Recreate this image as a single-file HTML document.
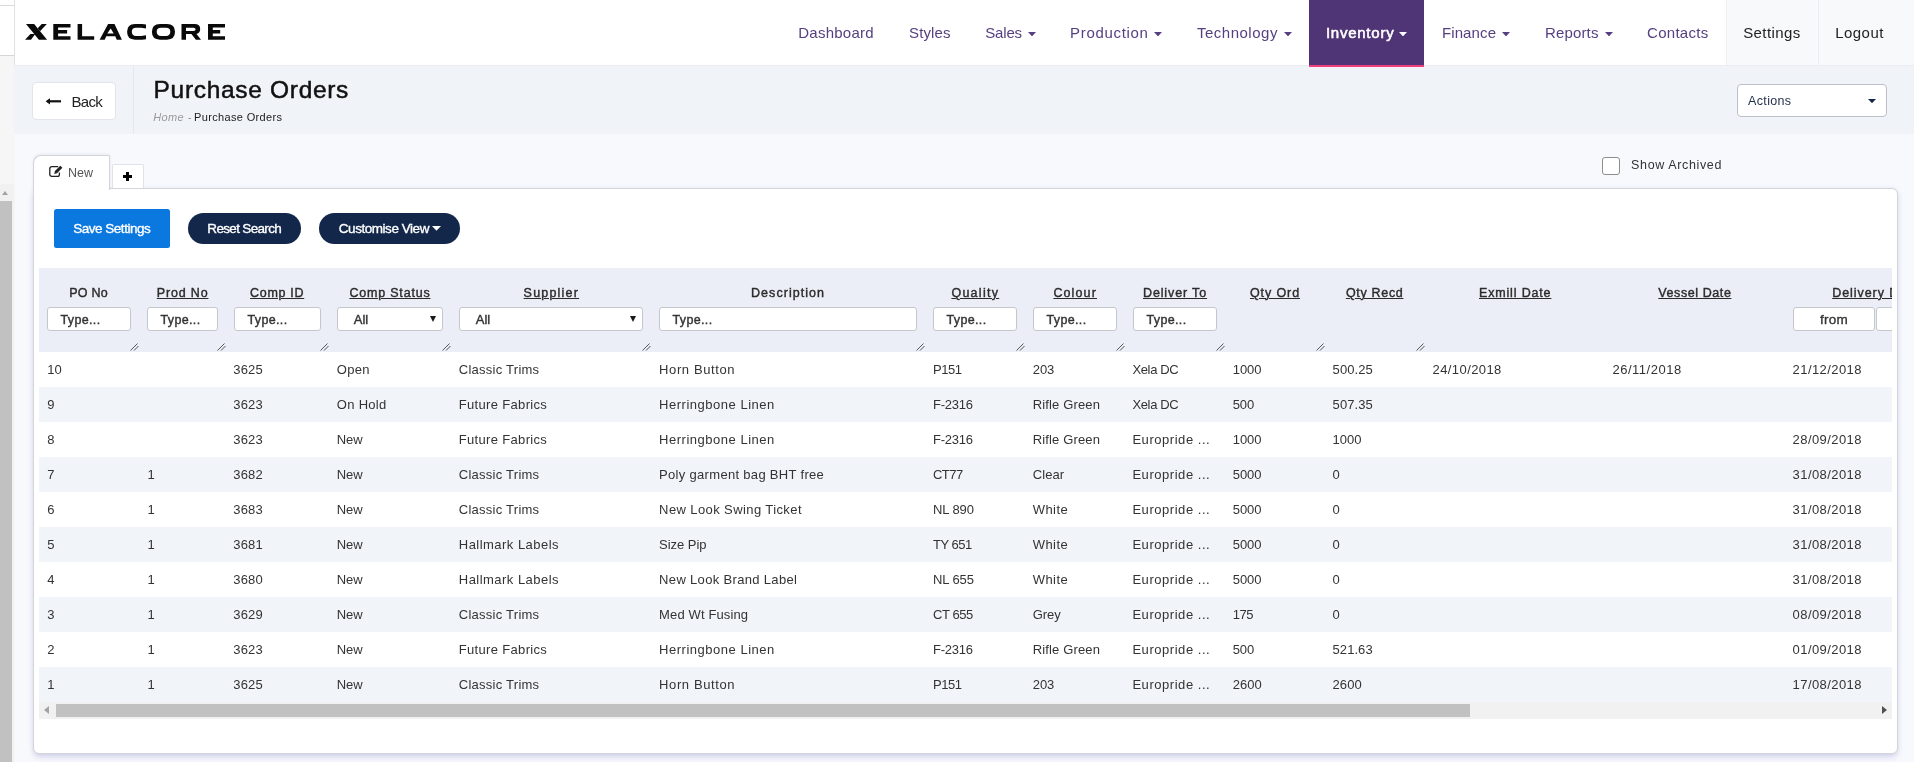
<!DOCTYPE html>
<html><head><meta charset="utf-8"><title>Purchase Orders</title>
<style>
*{box-sizing:border-box;margin:0;padding:0}
html,body{width:1914px;height:762px;overflow:hidden}
body{font-family:"Liberation Sans",sans-serif;background:#f8f9fd;position:relative;color:#333}
.a{position:absolute;white-space:nowrap}
#root{left:0;top:0;width:1914px;height:762px}
.t{will-change:transform}
#strip{left:0;top:0;width:15px;height:762px;background:#f6f6f6}
#topbar{left:14px;top:0;width:1900px;height:66px;background:#fff;border-bottom:1px solid #ebedf2}
.nav{color:#553f80}
.car{width:0;height:0;border-left:4px solid transparent;border-right:4px solid transparent;border-top:4.5px solid #553f80}
#inv{left:1309px;top:0;width:115px;height:67px;background:#4f3575;border-bottom:2px solid #ef3f7f}
#setbg{left:1726px;top:0;width:188px;height:65px;background:#f8f9fb;border-left:1px solid #eceef2}
#logsep{left:1818px;top:0;width:1px;height:65px;background:#eceef2}
#sub{left:14px;top:66px;width:1900px;height:68px;background:#f0f3f8}
#back{left:32px;top:82px;width:84px;height:37.5px;background:#fff;border:1px solid #e1e4ea;border-radius:4px}
#vdiv{left:133px;top:66px;width:1px;height:68px;background:#e4e7ee}
#actions{left:1737px;top:84px;width:150px;height:32.5px;background:#fff;border:1px solid #bcc0ca;border-radius:4px}
#panel{left:33px;top:188px;width:1865px;height:566px;background:#fff;border:1px solid #d3d5db;border-radius:0 6px 6px 6px;box-shadow:0 4px 6px -1px rgba(90,100,190,.24),0 0 4px rgba(120,125,160,.12)}
#tab1{left:33px;top:155px;width:77px;height:35px;background:#fff;border:1px solid #d3d5db;border-bottom:none;border-radius:8px 2px 0 0;box-shadow:0 -1px 3px rgba(80,90,140,.10)}
#tab2{left:112px;top:164px;width:32px;height:24px;background:#fff;border:1px solid #dfe2e8;border-bottom:none;border-radius:2px 2px 0 0}
#cb{left:1602px;top:157px;width:18px;height:18px;background:#fff;border:1px solid #8d8d8d;border-radius:3px}
.bt{color:#fff;-webkit-text-stroke:.35px #fff}
#b1{left:54px;top:209px;width:116px;height:38.5px;background:#0b78e0;border-radius:2.5px}
#b2{left:188px;top:213px;width:113px;height:30.5px;background:#13274b;border-radius:15.5px}
#b3{left:319px;top:213px;width:141px;height:30.5px;background:#13274b;border-radius:15.5px}
#thead{left:39px;top:268px;width:1853px;height:84px;background:#ebeef6;overflow:hidden}
.th{color:#2b2b2b}
.th.u{text-decoration:underline;text-underline-offset:1px;text-decoration-thickness:1px}
.in{top:39px;height:24px;background:#fff;border:1px solid #c4c7cc;border-radius:3px}
.it{color:#333}
.dn{width:0;height:0;border-left:3px solid transparent;border-right:3px solid transparent;border-top:6px solid #1a1a1a}
.rz{top:75px;width:9px;height:8px}
#tbody{left:39px;top:352px;width:1853px;height:350px;overflow:hidden;background:#fff}
.r{left:0;width:1853px;height:35px}
.r.o{background:#f1f4f9}
.c{color:#333}
#sb{left:39px;top:702px;width:1853px;height:17px;background:#f1f1f1}
#sbt{left:56px;top:704px;width:1414px;height:13px;background:#c1c1c1}
</style></head><body>

<div class="a" id="root">
<div class="a" id="strip"></div>
<div class="a" style="left:0;top:0;width:14px;height:55px;background:#fff"></div>
<div class="a" style="left:0;top:5px;width:14px;height:1px;background:#dadada"></div>
<div class="a" style="left:0;top:55px;width:14px;height:1px;background:#d6d6d6"></div>
<div class="a" style="left:0;top:184px;width:14px;height:578px;background:#f1f1f1"></div>
<div class="a" style="left:0;top:201px;width:12px;height:561px;background:#c1c1c1"></div>
<div class="a" style="left:2px;top:191px;width:0;height:0;border-left:3.5px solid transparent;border-right:3.5px solid transparent;border-bottom:4px solid #a3a3a3"></div>
<div class="a" id="topbar"></div>
<div class="a" style="left:14px;top:0;width:1px;height:65px;background:#e0e0e0"></div>
<div class="a" id="sub"></div><div class="a" id="vdiv"></div>
<div class="a" id="setbg"></div><div class="a" id="logsep"></div>
<div class="a" id="inv"></div>
<svg class="a" id="logo" style="left:25px;top:24px" width="202" height="16" viewBox="0 0 202 16"><g fill="#0a0a0a" fill-rule="evenodd"><path d="M1,0H9.1L22.1,15.7H13.9Z"/><path d="M16.75,0H21.8L15.05,7.18L12.7,4.33Z"/><path d="M5.4,10.05H10.2L6,15.7H0.1Z"/><path d="M28.3,0H45.5V3.5H33.1V6.1H42.1V9.5H33.1V12.2H45.5V15.7H28.3Z"/><path d="M52.6,0H57.1V12.2H69.2V15.7H52.6Z"/><path d="M74.6,15.7L83.1,0H89.5L96.9,15.7H91.8L90.2,12.3H81.3L79.7,15.7ZM85.7,4.4L88.7,9.5H82.3Z"/><path d="M121,0.4V4.5L116.3,3.7H111Q106.8,3.7 106.8,7.85Q106.8,12 111,12H116.3L121,11.2V15.3L117,15.7H110Q102.1,15.7 102.1,7.85Q102.1,0 110,0H117Z"/><path d="M135,0H142Q150,0 150,7.85Q150,15.7 142,15.7H135Q126.9,15.7 126.9,7.85Q126.9,0 135,0ZM136,3.8H141Q145.3,3.8 145.3,7.85Q145.3,12 141,12H136Q131.7,12 131.7,7.85Q131.7,3.8 136,3.8Z"/><path d="M156.5,0H169.5Q175.2,0 175.2,5.1Q175.2,9.2 171.5,10L176,15.7H170.9L166.4,10.1H161V15.7H156.5ZM161,3.8H168.5Q170.6,3.8 170.6,5.35Q170.6,6.9 168.5,6.9H161Z"/><path d="M183,0H200V3.5H187.8V6.1H195.2V9.5H187.8V12.2H200V15.7H183Z"/></g></svg>
<div class="a t nav" style="left:798px;top:22px;padding:0px 0 0 0.3px;font-size:15px;line-height:21px;letter-spacing:0.241px;">Dashboard</div>
<div class="a t nav" style="left:909px;top:22px;padding:0px 0 0 0.1px;font-size:15px;line-height:21px;letter-spacing:0.105px;">Styles</div>
<div class="a t nav" style="left:985px;top:22px;padding:0px 0 0 0.3px;font-size:15px;line-height:21px;letter-spacing:-0.2px;">Sales</div>
<svg class="a" style="left:1028px;top:32px" width="8" height="4.4" viewBox="0 0 8 4.4"><path d="M0 0H8L4.0 4.4Z" fill="#553f80"/></svg>
<div class="a t nav" style="left:1070px;top:22px;padding:0px 0 0 0.0px;font-size:15px;line-height:21px;letter-spacing:0.694px;">Production</div>
<svg class="a" style="left:1154px;top:32px" width="8" height="4.4" viewBox="0 0 8 4.4"><path d="M0 0H8L4.0 4.4Z" fill="#553f80"/></svg>
<div class="a t nav" style="left:1196px;top:22px;padding:0px 0 0 0.9px;font-size:15px;line-height:21px;letter-spacing:0.514px;">Technology</div>
<svg class="a" style="left:1284px;top:32px" width="8" height="4.4" viewBox="0 0 8 4.4"><path d="M0 0H8L4.0 4.4Z" fill="#553f80"/></svg>
<div class="a t nav" style="left:1441px;top:22px;padding:0px 0 0 0.9px;font-size:15px;line-height:21px;letter-spacing:0.121px;">Finance</div>
<svg class="a" style="left:1502px;top:32px" width="8" height="4.4" viewBox="0 0 8 4.4"><path d="M0 0H8L4.0 4.4Z" fill="#553f80"/></svg>
<div class="a t nav" style="left:1545px;top:22px;padding:0px 0 0 0.0px;font-size:15px;line-height:21px;letter-spacing:0.15px;">Reports</div>
<svg class="a" style="left:1605px;top:32px" width="8" height="4.4" viewBox="0 0 8 4.4"><path d="M0 0H8L4.0 4.4Z" fill="#553f80"/></svg>
<div class="a t nav" style="left:1647px;top:22px;padding:0px 0 0 0.0px;font-size:15px;line-height:21px;letter-spacing:0.293px;">Contacts</div>
<div class="a t" style="left:1325px;top:22px;padding:0px 0 0 0.9px;font-size:15px;line-height:21px;letter-spacing:0.756px;color:#fff;-webkit-text-stroke:.55px #fff;">Inventory</div>
<svg class="a" style="left:1399px;top:32px" width="8" height="4.4" viewBox="0 0 8 4.4"><path d="M0 0H8L4.0 4.4Z" fill="#fff"/></svg>
<div class="a t" style="left:1743px;top:22px;padding:0px 0 0 0.2px;font-size:15px;line-height:21px;letter-spacing:0.407px;color:#222;">Settings</div>
<div class="a t" style="left:1835px;top:22px;padding:0px 0 0 0.2px;font-size:15px;line-height:21px;letter-spacing:0.465px;color:#222;">Logout</div>
<div class="a" id="back"></div>
<svg class="a" style="left:45px;top:96px" width="17" height="11" viewBox="0 0 17 11"><path d="M2.5 5.3H16" stroke="#111" stroke-width="2.2" fill="none"/><path d="M0.6 5.3L5 2.2V8.4Z" fill="#111"/></svg>
<div class="a t" style="left:71px;top:91px;padding:0px 0 0 0.6px;font-size:15px;line-height:21px;letter-spacing:-0.767px;color:#222;">Back</div>
<div class="a t" style="left:153px;top:74px;padding:0px 0 0 0.6px;font-size:24.5px;line-height:31px;letter-spacing:0.684px;color:#111;-webkit-text-stroke:.5px #111;">Purchase Orders</div>
<div class="a t" style="left:153px;top:109px;padding:0px 0 0 0.2px;font-size:11px;line-height:16px;letter-spacing:0.375px;font-style:italic;color:#9a9a9a;">Home</div>
<div class="a t" style="left:187px;top:109px;padding:0px 0 0 0.7px;font-size:11px;line-height:16px;letter-spacing:0px;font-style:italic;color:#9a9a9a;">-</div>
<div class="a t" style="left:194px;top:109px;padding:0px 0 0 0.0px;font-size:11px;line-height:16px;letter-spacing:0.348px;color:#222;">Purchase Orders</div>
<div class="a" id="actions"></div>
<div class="a t" style="left:1748px;top:92px;padding:0px 0 0 0.1px;font-size:12.5px;line-height:18px;letter-spacing:0.333px;color:#1e2d4a;">Actions</div>
<svg class="a" style="left:1868px;top:99px" width="8" height="4.2" viewBox="0 0 8 4.2"><path d="M0 0H8L4.0 4.2Z" fill="#13274b"/></svg>
<div class="a" id="panel"></div>
<div class="a" id="tab1"></div><div class="a" id="tab2"></div>
<div class="a" style="left:34px;top:186px;width:75px;height:6px;background:#fff"></div>
<svg class="a" style="left:48px;top:164px" width="16" height="14" viewBox="0 0 16 14"><path d="M10.2 2.7H3.7A1.9 1.9 0 0 0 1.8 4.6V10.4A1.9 1.9 0 0 0 3.7 12.3H9.5A1.9 1.9 0 0 0 11.4 10.4V8.6" stroke="#222" stroke-width="1.3" fill="none"/><path d="M6.2 9.9L6.9 7.1L12.3 1.7L14.4 3.8L9 9.2Z" fill="#222"/></svg>
<div class="a t" style="left:68px;top:164px;padding:0px 0 0 0.1px;font-size:12.5px;line-height:18px;letter-spacing:-0.012px;color:#555;">New</div>
<div class="a" style="left:123px;top:175px;width:9.4px;height:2.7px;background:#000"></div><div class="a" style="left:126.35px;top:171.7px;width:2.7px;height:9.4px;background:#000"></div>
<div class="a" id="cb"></div>
<div class="a t" style="left:1631px;top:156px;padding:0px 0 0 0.1px;font-size:12.5px;line-height:18px;letter-spacing:0.631px;color:#333;">Show Archived</div>
<div class="a" id="b1"></div><div class="a" id="b2"></div><div class="a" id="b3"></div>
<div class="a t bt" style="left:73px;top:219px;padding:0px 0 0 0.2px;font-size:13.5px;line-height:19px;letter-spacing:-0.479px;">Save Settings</div>
<div class="a t bt" style="left:207px;top:219px;padding:0px 0 0 0.3px;font-size:13.5px;line-height:19px;letter-spacing:-0.668px;">Reset Search</div>
<div class="a t bt" style="left:338px;top:219px;padding:0px 0 0 0.8px;font-size:13.5px;line-height:19px;letter-spacing:-0.456px;">Customise View</div>
<svg class="a" style="left:432.3px;top:226.3px" width="9" height="4.8" viewBox="0 0 9 4.8"><path d="M0 0H9L4.5 4.8Z" fill="#fff"/></svg>
<div class="a" id="thead">
<div class="a t th" style="left:30px;top:16px;padding:0px 0 0 0.3px;font-size:12.5px;line-height:18px;letter-spacing:0.2px;-webkit-text-stroke:.4px #2b2b2b;">PO No</div>
<div class="a t th u" style="left:117px;top:16px;padding:0px 0 0 0.8px;font-size:12.5px;line-height:18px;letter-spacing:0.837px;-webkit-text-stroke:.4px #2b2b2b;">Prod No</div>
<div class="a t th u" style="left:211px;top:16px;padding:0px 0 0 0.1px;font-size:12.5px;line-height:18px;letter-spacing:0.688px;-webkit-text-stroke:.4px #2b2b2b;">Comp ID</div>
<div class="a t th u" style="left:310px;top:16px;padding:0px 0 0 0.4px;font-size:12.5px;line-height:18px;letter-spacing:0.805px;-webkit-text-stroke:.4px #2b2b2b;">Comp Status</div>
<div class="a t th u" style="left:484px;top:16px;padding:0px 0 0 0.6px;font-size:12.5px;line-height:18px;letter-spacing:1.204px;-webkit-text-stroke:.4px #2b2b2b;">Supplier</div>
<div class="a t th" style="left:712px;top:16px;padding:0px 0 0 0.0px;font-size:12.5px;line-height:18px;letter-spacing:1.05px;-webkit-text-stroke:.4px #2b2b2b;">Description</div>
<div class="a t th u" style="left:912px;top:16px;padding:0px 0 0 0.4px;font-size:12.5px;line-height:18px;letter-spacing:1.271px;-webkit-text-stroke:.4px #2b2b2b;">Quality</div>
<div class="a t th u" style="left:1014px;top:16px;padding:0px 0 0 0.4px;font-size:12.5px;line-height:18px;letter-spacing:1.125px;-webkit-text-stroke:.4px #2b2b2b;">Colour</div>
<div class="a t th u" style="left:1104px;top:16px;padding:0px 0 0 0.0px;font-size:12.5px;line-height:18px;letter-spacing:0.869px;-webkit-text-stroke:.4px #2b2b2b;">Deliver To</div>
<div class="a t th u" style="left:1211px;top:16px;padding:0px 0 0 0.0px;font-size:12.5px;line-height:18px;letter-spacing:0.892px;-webkit-text-stroke:.4px #2b2b2b;">Qty Ord</div>
<div class="a t th u" style="left:1306px;top:16px;padding:0px 0 0 0.9px;font-size:12.5px;line-height:18px;letter-spacing:0.682px;-webkit-text-stroke:.4px #2b2b2b;">Qty Recd</div>
<div class="a t th u" style="left:1440px;top:16px;padding:0px 0 0 0.0px;font-size:12.5px;line-height:18px;letter-spacing:0.835px;-webkit-text-stroke:.4px #2b2b2b;">Exmill Date</div>
<div class="a t th u" style="left:1619px;top:16px;padding:0px 0 0 0.3px;font-size:12.5px;line-height:18px;letter-spacing:0.585px;-webkit-text-stroke:.4px #2b2b2b;">Vessel Date</div>
<div class="a t th u" style="left:1793px;top:16px;padding:0px 0 0 0.2px;font-size:12.5px;line-height:18px;letter-spacing:0.942px;-webkit-text-stroke:.4px #2b2b2b;">Delivery Date</div>
<div class="a in" style="left:8px;width:84px"></div>
<div class="a t it" style="left:21px;top:43px;padding:0px 0 0 0.6px;font-size:12.5px;line-height:18px;letter-spacing:0.333px;-webkit-text-stroke:.4px #333;">Type...</div>
<div class="a in" style="left:108px;width:71px"></div>
<div class="a t it" style="left:121px;top:43px;padding:0px 0 0 0.6px;font-size:12.5px;line-height:18px;letter-spacing:0.333px;-webkit-text-stroke:.4px #333;">Type...</div>
<div class="a in" style="left:195px;width:87px"></div>
<div class="a t it" style="left:208px;top:43px;padding:0px 0 0 0.6px;font-size:12.5px;line-height:18px;letter-spacing:0.333px;-webkit-text-stroke:.4px #333;">Type...</div>
<div class="a in" style="left:620px;width:258px"></div>
<div class="a t it" style="left:633px;top:43px;padding:0px 0 0 0.6px;font-size:12.5px;line-height:18px;letter-spacing:0.333px;-webkit-text-stroke:.4px #333;">Type...</div>
<div class="a in" style="left:894px;width:84px"></div>
<div class="a t it" style="left:907px;top:43px;padding:0px 0 0 0.6px;font-size:12.5px;line-height:18px;letter-spacing:0.333px;-webkit-text-stroke:.4px #333;">Type...</div>
<div class="a in" style="left:994px;width:84px"></div>
<div class="a t it" style="left:1007px;top:43px;padding:0px 0 0 0.6px;font-size:12.5px;line-height:18px;letter-spacing:0.333px;-webkit-text-stroke:.4px #333;">Type...</div>
<div class="a in" style="left:1094px;width:84px"></div>
<div class="a t it" style="left:1107px;top:43px;padding:0px 0 0 0.6px;font-size:12.5px;line-height:18px;letter-spacing:0.333px;-webkit-text-stroke:.4px #333;">Type...</div>
<div class="a in" style="left:298px;width:106px"></div>
<div class="a t it" style="left:314px;top:42px;padding:0px 0 0 0.8px;font-size:13px;line-height:19px;letter-spacing:0.0px;-webkit-text-stroke:.4px #333;">All</div>
<div class="a dn" style="left:391px;top:48.2px"></div>
<div class="a in" style="left:420px;width:184px"></div>
<div class="a t it" style="left:436px;top:42px;padding:0px 0 0 0.8px;font-size:13px;line-height:19px;letter-spacing:0.0px;-webkit-text-stroke:.4px #333;">All</div>
<div class="a dn" style="left:591px;top:48.2px"></div>
<div class="a in" style="left:1754px;width:82px"></div>
<div class="a t it" style="left:1780px;top:42px;padding:0px 0 0 0.9px;font-size:13.5px;line-height:19px;letter-spacing:0.3px;-webkit-text-stroke:.35px #333;">from</div>
<div class="a in" style="left:1836.5px;width:82px"></div>
<svg class="a rz" style="left:91px" viewBox="0 0 9 8"><path d="M0.5 7.5L7.5 0.5M4 7.5L8.5 3" stroke="#444" stroke-width=".9" fill="none"/></svg>
<svg class="a rz" style="left:178px" viewBox="0 0 9 8"><path d="M0.5 7.5L7.5 0.5M4 7.5L8.5 3" stroke="#444" stroke-width=".9" fill="none"/></svg>
<svg class="a rz" style="left:281px" viewBox="0 0 9 8"><path d="M0.5 7.5L7.5 0.5M4 7.5L8.5 3" stroke="#444" stroke-width=".9" fill="none"/></svg>
<svg class="a rz" style="left:403px" viewBox="0 0 9 8"><path d="M0.5 7.5L7.5 0.5M4 7.5L8.5 3" stroke="#444" stroke-width=".9" fill="none"/></svg>
<svg class="a rz" style="left:603px" viewBox="0 0 9 8"><path d="M0.5 7.5L7.5 0.5M4 7.5L8.5 3" stroke="#444" stroke-width=".9" fill="none"/></svg>
<svg class="a rz" style="left:877px" viewBox="0 0 9 8"><path d="M0.5 7.5L7.5 0.5M4 7.5L8.5 3" stroke="#444" stroke-width=".9" fill="none"/></svg>
<svg class="a rz" style="left:977px" viewBox="0 0 9 8"><path d="M0.5 7.5L7.5 0.5M4 7.5L8.5 3" stroke="#444" stroke-width=".9" fill="none"/></svg>
<svg class="a rz" style="left:1077px" viewBox="0 0 9 8"><path d="M0.5 7.5L7.5 0.5M4 7.5L8.5 3" stroke="#444" stroke-width=".9" fill="none"/></svg>
<svg class="a rz" style="left:1177px" viewBox="0 0 9 8"><path d="M0.5 7.5L7.5 0.5M4 7.5L8.5 3" stroke="#444" stroke-width=".9" fill="none"/></svg>
<svg class="a rz" style="left:1277px" viewBox="0 0 9 8"><path d="M0.5 7.5L7.5 0.5M4 7.5L8.5 3" stroke="#444" stroke-width=".9" fill="none"/></svg>
<svg class="a rz" style="left:1377px" viewBox="0 0 9 8"><path d="M0.5 7.5L7.5 0.5M4 7.5L8.5 3" stroke="#444" stroke-width=".9" fill="none"/></svg>
</div>
<div class="a" id="tbody">
<div class="a r" style="top:0px">
<div class="a t c" style="left:8px;top:8px;padding:0px 0 0 0.2px;font-size:13px;line-height:19px;letter-spacing:0px;">10</div>
<div class="a t c" style="left:194px;top:8px;padding:0px 0 0 0.3px;font-size:13px;line-height:19px;letter-spacing:0.142px;">3625</div>
<div class="a t c" style="left:297px;top:8px;padding:0px 0 0 0.8px;font-size:13px;line-height:19px;letter-spacing:0.283px;">Open</div>
<div class="a t c" style="left:419px;top:8px;padding:0px 0 0 0.8px;font-size:13px;line-height:19px;letter-spacing:0.254px;">Classic Trims</div>
<div class="a t c" style="left:620px;top:8px;padding:0px 0 0 0.1px;font-size:13px;line-height:19px;letter-spacing:0.602px;">Horn Button</div>
<div class="a t c" style="left:894px;top:8px;padding:0px 0 0 0.0px;font-size:13px;line-height:19px;letter-spacing:-0.492px;">P151</div>
<div class="a t c" style="left:993px;top:8px;padding:0px 0 0 0.7px;font-size:13px;line-height:19px;letter-spacing:-0.025px;">203</div>
<div class="a t c" style="left:1093px;top:8px;padding:0px 0 0 0.4px;font-size:13px;line-height:19px;letter-spacing:-0.346px;">Xela DC</div>
<div class="a t c" style="left:1193px;top:8px;padding:0px 0 0 0.7px;font-size:13px;line-height:19px;letter-spacing:-0.025px;">1000</div>
<div class="a t c" style="left:1293px;top:8px;padding:0px 0 0 0.6px;font-size:13px;line-height:19px;letter-spacing:0.07px;">500.25</div>
<div class="a t c" style="left:1393px;top:8px;padding:0px 0 0 0.5px;font-size:13px;line-height:19px;letter-spacing:0.419px;">24/10/2018</div>
<div class="a t c" style="left:1573px;top:8px;padding:0px 0 0 0.4px;font-size:13px;line-height:19px;letter-spacing:0.531px;">26/11/2018</div>
<div class="a t c" style="left:1753px;top:8px;padding:0px 0 0 0.6px;font-size:13px;line-height:19px;letter-spacing:0.419px;">21/12/2018</div>
</div>
<div class="a r o" style="top:35px">
<div class="a t c" style="left:8px;top:8px;padding:0px 0 0 0.2px;font-size:13px;line-height:19px;letter-spacing:0px;">9</div>
<div class="a t c" style="left:194px;top:8px;padding:0px 0 0 0.3px;font-size:13px;line-height:19px;letter-spacing:0.142px;">3623</div>
<div class="a t c" style="left:297px;top:8px;padding:0px 0 0 0.8px;font-size:13px;line-height:19px;letter-spacing:0.292px;">On Hold</div>
<div class="a t c" style="left:419px;top:8px;padding:0px 0 0 0.8px;font-size:13px;line-height:19px;letter-spacing:0.327px;">Future Fabrics</div>
<div class="a t c" style="left:620px;top:8px;padding:0px 0 0 0.1px;font-size:13px;line-height:19px;letter-spacing:0.513px;">Herringbone Linen</div>
<div class="a t c" style="left:894px;top:8px;padding:0px 0 0 0.0px;font-size:13px;line-height:19px;letter-spacing:-0.25px;">F-2316</div>
<div class="a t c" style="left:993px;top:8px;padding:0px 0 0 0.7px;font-size:13px;line-height:19px;letter-spacing:0.155px;">Rifle Green</div>
<div class="a t c" style="left:1093px;top:8px;padding:0px 0 0 0.4px;font-size:13px;line-height:19px;letter-spacing:-0.346px;">Xela DC</div>
<div class="a t c" style="left:1193px;top:8px;padding:0px 0 0 0.7px;font-size:13px;line-height:19px;letter-spacing:-0.075px;">500</div>
<div class="a t c" style="left:1293px;top:8px;padding:0px 0 0 0.6px;font-size:13px;line-height:19px;letter-spacing:0.07px;">507.35</div>
</div>
<div class="a r" style="top:70px">
<div class="a t c" style="left:8px;top:8px;padding:0px 0 0 0.2px;font-size:13px;line-height:19px;letter-spacing:0px;">8</div>
<div class="a t c" style="left:194px;top:8px;padding:0px 0 0 0.3px;font-size:13px;line-height:19px;letter-spacing:0.142px;">3623</div>
<div class="a t c" style="left:297px;top:8px;padding:0px 0 0 0.8px;font-size:13px;line-height:19px;letter-spacing:-0.113px;">New</div>
<div class="a t c" style="left:419px;top:8px;padding:0px 0 0 0.8px;font-size:13px;line-height:19px;letter-spacing:0.327px;">Future Fabrics</div>
<div class="a t c" style="left:620px;top:8px;padding:0px 0 0 0.1px;font-size:13px;line-height:19px;letter-spacing:0.513px;">Herringbone Linen</div>
<div class="a t c" style="left:894px;top:8px;padding:0px 0 0 0.0px;font-size:13px;line-height:19px;letter-spacing:-0.25px;">F-2316</div>
<div class="a t c" style="left:993px;top:8px;padding:0px 0 0 0.7px;font-size:13px;line-height:19px;letter-spacing:0.155px;">Rifle Green</div>
<div class="a t c" style="left:1093px;top:8px;padding:0px 0 0 0.4px;font-size:13px;line-height:19px;letter-spacing:0.544px;">Europride ...</div>
<div class="a t c" style="left:1193px;top:8px;padding:0px 0 0 0.7px;font-size:13px;line-height:19px;letter-spacing:-0.025px;">1000</div>
<div class="a t c" style="left:1293px;top:8px;padding:0px 0 0 0.6px;font-size:13px;line-height:19px;letter-spacing:-0.025px;">1000</div>
<div class="a t c" style="left:1753px;top:8px;padding:0px 0 0 0.6px;font-size:13px;line-height:19px;letter-spacing:0.419px;">28/09/2018</div>
</div>
<div class="a r o" style="top:105px">
<div class="a t c" style="left:8px;top:8px;padding:0px 0 0 0.2px;font-size:13px;line-height:19px;letter-spacing:0px;">7</div>
<div class="a t c" style="left:108px;top:8px;padding:0px 0 0 0.6px;font-size:13px;line-height:19px;letter-spacing:0px;">1</div>
<div class="a t c" style="left:194px;top:8px;padding:0px 0 0 0.3px;font-size:13px;line-height:19px;letter-spacing:0.142px;">3682</div>
<div class="a t c" style="left:297px;top:8px;padding:0px 0 0 0.8px;font-size:13px;line-height:19px;letter-spacing:-0.113px;">New</div>
<div class="a t c" style="left:419px;top:8px;padding:0px 0 0 0.8px;font-size:13px;line-height:19px;letter-spacing:0.254px;">Classic Trims</div>
<div class="a t c" style="left:620px;top:8px;padding:0px 0 0 0.1px;font-size:13px;line-height:19px;letter-spacing:0.31px;">Poly garment bag BHT free</div>
<div class="a t c" style="left:894px;top:8px;padding:0px 0 0 0.0px;font-size:13px;line-height:19px;letter-spacing:-0.517px;">CT77</div>
<div class="a t c" style="left:993px;top:8px;padding:0px 0 0 0.7px;font-size:13px;line-height:19px;letter-spacing:0.094px;">Clear</div>
<div class="a t c" style="left:1093px;top:8px;padding:0px 0 0 0.4px;font-size:13px;line-height:19px;letter-spacing:0.544px;">Europride ...</div>
<div class="a t c" style="left:1193px;top:8px;padding:0px 0 0 0.7px;font-size:13px;line-height:19px;letter-spacing:-0.025px;">5000</div>
<div class="a t c" style="left:1293px;top:8px;padding:0px 0 0 0.6px;font-size:13px;line-height:19px;letter-spacing:0px;">0</div>
<div class="a t c" style="left:1753px;top:8px;padding:0px 0 0 0.6px;font-size:13px;line-height:19px;letter-spacing:0.419px;">31/08/2018</div>
</div>
<div class="a r" style="top:140px">
<div class="a t c" style="left:8px;top:8px;padding:0px 0 0 0.2px;font-size:13px;line-height:19px;letter-spacing:0px;">6</div>
<div class="a t c" style="left:108px;top:8px;padding:0px 0 0 0.6px;font-size:13px;line-height:19px;letter-spacing:0px;">1</div>
<div class="a t c" style="left:194px;top:8px;padding:0px 0 0 0.3px;font-size:13px;line-height:19px;letter-spacing:0.142px;">3683</div>
<div class="a t c" style="left:297px;top:8px;padding:0px 0 0 0.8px;font-size:13px;line-height:19px;letter-spacing:-0.113px;">New</div>
<div class="a t c" style="left:419px;top:8px;padding:0px 0 0 0.8px;font-size:13px;line-height:19px;letter-spacing:0.254px;">Classic Trims</div>
<div class="a t c" style="left:620px;top:8px;padding:0px 0 0 0.1px;font-size:13px;line-height:19px;letter-spacing:0.401px;">New Look Swing Ticket</div>
<div class="a t c" style="left:894px;top:8px;padding:0px 0 0 0.0px;font-size:13px;line-height:19px;letter-spacing:-0.1px;">NL 890</div>
<div class="a t c" style="left:993px;top:8px;padding:0px 0 0 0.7px;font-size:13px;line-height:19px;letter-spacing:0.462px;">White</div>
<div class="a t c" style="left:1093px;top:8px;padding:0px 0 0 0.4px;font-size:13px;line-height:19px;letter-spacing:0.544px;">Europride ...</div>
<div class="a t c" style="left:1193px;top:8px;padding:0px 0 0 0.7px;font-size:13px;line-height:19px;letter-spacing:-0.025px;">5000</div>
<div class="a t c" style="left:1293px;top:8px;padding:0px 0 0 0.6px;font-size:13px;line-height:19px;letter-spacing:0px;">0</div>
<div class="a t c" style="left:1753px;top:8px;padding:0px 0 0 0.6px;font-size:13px;line-height:19px;letter-spacing:0.419px;">31/08/2018</div>
</div>
<div class="a r o" style="top:175px">
<div class="a t c" style="left:8px;top:8px;padding:0px 0 0 0.2px;font-size:13px;line-height:19px;letter-spacing:0px;">5</div>
<div class="a t c" style="left:108px;top:8px;padding:0px 0 0 0.6px;font-size:13px;line-height:19px;letter-spacing:0px;">1</div>
<div class="a t c" style="left:194px;top:8px;padding:0px 0 0 0.3px;font-size:13px;line-height:19px;letter-spacing:0.142px;">3681</div>
<div class="a t c" style="left:297px;top:8px;padding:0px 0 0 0.8px;font-size:13px;line-height:19px;letter-spacing:-0.113px;">New</div>
<div class="a t c" style="left:419px;top:8px;padding:0px 0 0 0.8px;font-size:13px;line-height:19px;letter-spacing:0.468px;">Hallmark Labels</div>
<div class="a t c" style="left:620px;top:8px;padding:0px 0 0 0.1px;font-size:13px;line-height:19px;letter-spacing:-0.036px;">Size Pip</div>
<div class="a t c" style="left:894px;top:8px;padding:0px 0 0 0.0px;font-size:13px;line-height:19px;letter-spacing:-0.465px;">TY 651</div>
<div class="a t c" style="left:993px;top:8px;padding:0px 0 0 0.7px;font-size:13px;line-height:19px;letter-spacing:0.462px;">White</div>
<div class="a t c" style="left:1093px;top:8px;padding:0px 0 0 0.4px;font-size:13px;line-height:19px;letter-spacing:0.544px;">Europride ...</div>
<div class="a t c" style="left:1193px;top:8px;padding:0px 0 0 0.7px;font-size:13px;line-height:19px;letter-spacing:-0.025px;">5000</div>
<div class="a t c" style="left:1293px;top:8px;padding:0px 0 0 0.6px;font-size:13px;line-height:19px;letter-spacing:0px;">0</div>
<div class="a t c" style="left:1753px;top:8px;padding:0px 0 0 0.6px;font-size:13px;line-height:19px;letter-spacing:0.419px;">31/08/2018</div>
</div>
<div class="a r" style="top:210px">
<div class="a t c" style="left:8px;top:8px;padding:0px 0 0 0.2px;font-size:13px;line-height:19px;letter-spacing:0px;">4</div>
<div class="a t c" style="left:108px;top:8px;padding:0px 0 0 0.6px;font-size:13px;line-height:19px;letter-spacing:0px;">1</div>
<div class="a t c" style="left:194px;top:8px;padding:0px 0 0 0.3px;font-size:13px;line-height:19px;letter-spacing:0.142px;">3680</div>
<div class="a t c" style="left:297px;top:8px;padding:0px 0 0 0.8px;font-size:13px;line-height:19px;letter-spacing:-0.113px;">New</div>
<div class="a t c" style="left:419px;top:8px;padding:0px 0 0 0.8px;font-size:13px;line-height:19px;letter-spacing:0.468px;">Hallmark Labels</div>
<div class="a t c" style="left:620px;top:8px;padding:0px 0 0 0.1px;font-size:13px;line-height:19px;letter-spacing:0.332px;">New Look Brand Label</div>
<div class="a t c" style="left:894px;top:8px;padding:0px 0 0 0.0px;font-size:13px;line-height:19px;letter-spacing:-0.1px;">NL 655</div>
<div class="a t c" style="left:993px;top:8px;padding:0px 0 0 0.7px;font-size:13px;line-height:19px;letter-spacing:0.462px;">White</div>
<div class="a t c" style="left:1093px;top:8px;padding:0px 0 0 0.4px;font-size:13px;line-height:19px;letter-spacing:0.544px;">Europride ...</div>
<div class="a t c" style="left:1193px;top:8px;padding:0px 0 0 0.7px;font-size:13px;line-height:19px;letter-spacing:-0.025px;">5000</div>
<div class="a t c" style="left:1293px;top:8px;padding:0px 0 0 0.6px;font-size:13px;line-height:19px;letter-spacing:0px;">0</div>
<div class="a t c" style="left:1753px;top:8px;padding:0px 0 0 0.6px;font-size:13px;line-height:19px;letter-spacing:0.419px;">31/08/2018</div>
</div>
<div class="a r o" style="top:245px">
<div class="a t c" style="left:8px;top:8px;padding:0px 0 0 0.2px;font-size:13px;line-height:19px;letter-spacing:0px;">3</div>
<div class="a t c" style="left:108px;top:8px;padding:0px 0 0 0.6px;font-size:13px;line-height:19px;letter-spacing:0px;">1</div>
<div class="a t c" style="left:194px;top:8px;padding:0px 0 0 0.3px;font-size:13px;line-height:19px;letter-spacing:0.142px;">3629</div>
<div class="a t c" style="left:297px;top:8px;padding:0px 0 0 0.8px;font-size:13px;line-height:19px;letter-spacing:-0.113px;">New</div>
<div class="a t c" style="left:419px;top:8px;padding:0px 0 0 0.8px;font-size:13px;line-height:19px;letter-spacing:0.254px;">Classic Trims</div>
<div class="a t c" style="left:620px;top:8px;padding:0px 0 0 0.1px;font-size:13px;line-height:19px;letter-spacing:0.127px;">Med Wt Fusing</div>
<div class="a t c" style="left:894px;top:8px;padding:0px 0 0 0.0px;font-size:13px;line-height:19px;letter-spacing:-0.435px;">CT 655</div>
<div class="a t c" style="left:993px;top:8px;padding:0px 0 0 0.7px;font-size:13px;line-height:19px;letter-spacing:-0.042px;">Grey</div>
<div class="a t c" style="left:1093px;top:8px;padding:0px 0 0 0.4px;font-size:13px;line-height:19px;letter-spacing:0.544px;">Europride ...</div>
<div class="a t c" style="left:1193px;top:8px;padding:0px 0 0 0.7px;font-size:13px;line-height:19px;letter-spacing:-0.475px;">175</div>
<div class="a t c" style="left:1293px;top:8px;padding:0px 0 0 0.6px;font-size:13px;line-height:19px;letter-spacing:0px;">0</div>
<div class="a t c" style="left:1753px;top:8px;padding:0px 0 0 0.6px;font-size:13px;line-height:19px;letter-spacing:0.419px;">08/09/2018</div>
</div>
<div class="a r" style="top:280px">
<div class="a t c" style="left:8px;top:8px;padding:0px 0 0 0.2px;font-size:13px;line-height:19px;letter-spacing:0px;">2</div>
<div class="a t c" style="left:108px;top:8px;padding:0px 0 0 0.6px;font-size:13px;line-height:19px;letter-spacing:0px;">1</div>
<div class="a t c" style="left:194px;top:8px;padding:0px 0 0 0.3px;font-size:13px;line-height:19px;letter-spacing:0.142px;">3623</div>
<div class="a t c" style="left:297px;top:8px;padding:0px 0 0 0.8px;font-size:13px;line-height:19px;letter-spacing:-0.113px;">New</div>
<div class="a t c" style="left:419px;top:8px;padding:0px 0 0 0.8px;font-size:13px;line-height:19px;letter-spacing:0.327px;">Future Fabrics</div>
<div class="a t c" style="left:620px;top:8px;padding:0px 0 0 0.1px;font-size:13px;line-height:19px;letter-spacing:0.513px;">Herringbone Linen</div>
<div class="a t c" style="left:894px;top:8px;padding:0px 0 0 0.0px;font-size:13px;line-height:19px;letter-spacing:-0.25px;">F-2316</div>
<div class="a t c" style="left:993px;top:8px;padding:0px 0 0 0.7px;font-size:13px;line-height:19px;letter-spacing:0.155px;">Rifle Green</div>
<div class="a t c" style="left:1093px;top:8px;padding:0px 0 0 0.4px;font-size:13px;line-height:19px;letter-spacing:0.544px;">Europride ...</div>
<div class="a t c" style="left:1193px;top:8px;padding:0px 0 0 0.7px;font-size:13px;line-height:19px;letter-spacing:-0.075px;">500</div>
<div class="a t c" style="left:1293px;top:8px;padding:0px 0 0 0.6px;font-size:13px;line-height:19px;letter-spacing:0.05px;">521.63</div>
<div class="a t c" style="left:1753px;top:8px;padding:0px 0 0 0.6px;font-size:13px;line-height:19px;letter-spacing:0.419px;">01/09/2018</div>
</div>
<div class="a r o" style="top:315px">
<div class="a t c" style="left:8px;top:8px;padding:0px 0 0 0.2px;font-size:13px;line-height:19px;letter-spacing:0px;">1</div>
<div class="a t c" style="left:108px;top:8px;padding:0px 0 0 0.6px;font-size:13px;line-height:19px;letter-spacing:0px;">1</div>
<div class="a t c" style="left:194px;top:8px;padding:0px 0 0 0.3px;font-size:13px;line-height:19px;letter-spacing:0.142px;">3625</div>
<div class="a t c" style="left:297px;top:8px;padding:0px 0 0 0.8px;font-size:13px;line-height:19px;letter-spacing:-0.113px;">New</div>
<div class="a t c" style="left:419px;top:8px;padding:0px 0 0 0.8px;font-size:13px;line-height:19px;letter-spacing:0.254px;">Classic Trims</div>
<div class="a t c" style="left:620px;top:8px;padding:0px 0 0 0.1px;font-size:13px;line-height:19px;letter-spacing:0.602px;">Horn Button</div>
<div class="a t c" style="left:894px;top:8px;padding:0px 0 0 0.0px;font-size:13px;line-height:19px;letter-spacing:-0.492px;">P151</div>
<div class="a t c" style="left:993px;top:8px;padding:0px 0 0 0.7px;font-size:13px;line-height:19px;letter-spacing:-0.025px;">203</div>
<div class="a t c" style="left:1093px;top:8px;padding:0px 0 0 0.4px;font-size:13px;line-height:19px;letter-spacing:0.544px;">Europride ...</div>
<div class="a t c" style="left:1193px;top:8px;padding:0px 0 0 0.7px;font-size:13px;line-height:19px;letter-spacing:0.042px;">2600</div>
<div class="a t c" style="left:1293px;top:8px;padding:0px 0 0 0.6px;font-size:13px;line-height:19px;letter-spacing:0.042px;">2600</div>
<div class="a t c" style="left:1753px;top:8px;padding:0px 0 0 0.6px;font-size:13px;line-height:19px;letter-spacing:0.419px;">17/08/2018</div>
</div>
</div>
<div class="a" id="sb"></div><div class="a" id="sbt"></div>
<div class="a" style="left:44px;top:706px;width:0;height:0;border-top:4px solid transparent;border-bottom:4px solid transparent;border-right:5px solid #a3a3a3"></div>
<div class="a" style="left:1882px;top:706px;width:0;height:0;border-top:4px solid transparent;border-bottom:4px solid transparent;border-left:5px solid #505050"></div>
</div>
</body></html>
